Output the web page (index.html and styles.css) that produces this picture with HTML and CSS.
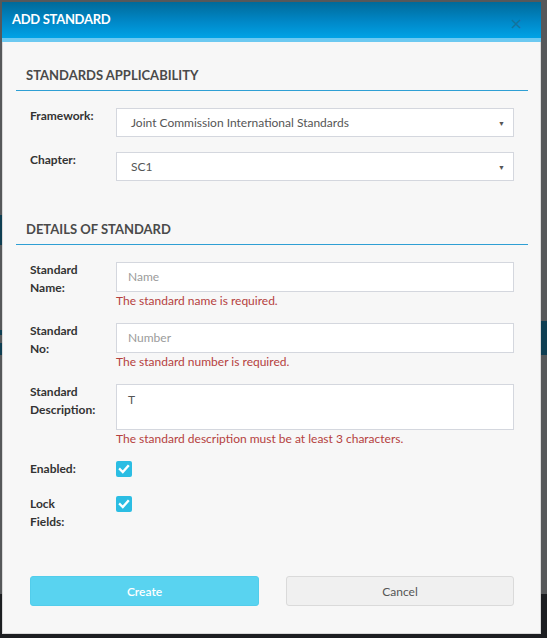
FILE: index.html
```html
<!DOCTYPE html>
<html>
<head>
<meta charset="utf-8">
<link rel="stylesheet" href="styles.css">
</head>
<body>
<div class="backdrop">
  <div class="bg-band bg-band-a"></div>
  <div class="bg-band bg-band-b"></div>
  <div class="bg-band bg-band-c"></div>
  <div class="bg-band bg-band-d"></div>
  <div class="bg-bottom"></div>
</div>
<div class="modal">
  <div class="modal-header">
    <h1 class="modal-title">ADD STANDARD</h1>
    <span class="modal-close">&times;</span>
  </div>
  <div class="modal-body">
    <section class="section">
      <h2 class="section-title">STANDARDS APPLICABILITY</h2>
      <div class="form">
        <div class="row">
          <label class="label">Framework:</label>
          <div class="control">
            <div class="select"><span>Joint Commission International Standards</span><span class="caret">&#9660;</span></div>
          </div>
        </div>
        <div class="row">
          <label class="label">Chapter:</label>
          <div class="control">
            <div class="select"><span>SC1</span><span class="caret">&#9660;</span></div>
          </div>
        </div>
      </div>
    </section>
    <section class="section section-second">
      <h2 class="section-title">DETAILS OF STANDARD</h2>
      <div class="form">
        <div class="row row-input">
          <label class="label">Standard<br>Name:</label>
          <div class="control">
            <div class="input placeholder">Name</div>
            <div class="error">The standard name is required.</div>
          </div>
        </div>
        <div class="row row-input">
          <label class="label">Standard<br>No:</label>
          <div class="control">
            <div class="input placeholder">Number</div>
            <div class="error">The standard number is required.</div>
          </div>
        </div>
        <div class="row row-input">
          <label class="label">Standard<br>Description:</label>
          <div class="control">
            <div class="input textarea">T</div>
            <div class="error">The standard description must be at least 3 characters.</div>
          </div>
        </div>
        <div class="row row-check">
          <label class="label">Enabled:</label>
          <div class="control">
            <span class="checkbox"><svg width="12" height="12" viewBox="0 0 12 12"><path d="M2 6.3 L4.8 9 L10 3.2" fill="none" stroke="#fff" stroke-width="2.4" stroke-linecap="square"/></svg></span>
          </div>
        </div>
        <div class="row row-check">
          <label class="label">Lock<br>Fields:</label>
          <div class="control">
            <span class="checkbox"><svg width="12" height="12" viewBox="0 0 12 12"><path d="M2 6.3 L4.8 9 L10 3.2" fill="none" stroke="#fff" stroke-width="2.4" stroke-linecap="square"/></svg></span>
          </div>
        </div>
      </div>
    </section>
    <div class="actions">
      <button class="btn btn-primary">Create</button>
      <button class="btn btn-default">Cancel</button>
    </div>
  </div>
</div>
</body>
</html>
```

FILE: styles.css
```css
* { box-sizing: border-box; }
html, body {
  margin: 0;
  padding: 0;
  width: 547px;
  height: 638px;
  overflow: hidden;
  font-family: "Lato", "Open Sans", sans-serif;
}
body { background: #555759; position: relative; }

.backdrop { position: absolute; inset: 0; background: #56585a; }
.bg-band { position: absolute; background: #0e3e52; }
.bg-band-a { left: 0; top: 215px; width: 4px; height: 30px; }
.bg-band-b { left: 0; top: 330px; width: 4px; height: 5px; }
.bg-band-c { left: 0; top: 343px; width: 4px; height: 12px; }
.bg-band-d { right: 0; top: 321px; width: 8px; height: 34px; }
.bg-bottom { position: absolute; left: 0; right: 0; top: 594px; bottom: 0; background: #1c1e21; }

.modal {
  position: absolute;
  left: 2px;
  top: 2px;
  width: 539px;
  height: 632px;
  background: #f7f7f7;
  border: 1px solid #d9d9d9;
  border-top: none;
  display: flex;
  flex-direction: column;
}

.modal-header {
  height: 40px;
  background: linear-gradient(to bottom, #006a99 0%, #0088c8 55%, #00a3e6 100%);
  background-size: 100% 36px;
  background-repeat: no-repeat;
  border-bottom: 4px solid #6cc9f1;
  display: flex;
  align-items: center;
  justify-content: space-between;
  padding: 0 18px 0 10px;
  margin: 0 -1px;
}
.modal-title {
  margin: 0;
  color: #fff;
  font-size: 13px;
  font-weight: 700;
  letter-spacing: -0.3px;
  padding-bottom: 2px;
}
.modal-close {
  color: #1a6f95;
  font-size: 16px;
  line-height: 1;
  margin-top: 8px;
  opacity: 0.85;
  font-family: "DejaVu Sans", sans-serif;
}

.modal-body {
  flex: 1;
  padding: 24px 12px 0 13px;
  display: flex;
  flex-direction: column;
}

.section-title {
  margin: 0;
  padding: 0 0 6px 10px;
  height: 25px;
  line-height: 18px;
  font-size: 13px;
  font-weight: 700;
  color: #4a4a4a;
  letter-spacing: 0;
  border-bottom: 1px solid #2e9fd4;
}
.section-second { margin-top: 24px; }

.form { padding: 17px 14px 0 14px; }

.row {
  display: grid;
  grid-template-columns: 86px 1fr;
  margin-bottom: 15px;
}
.row-input { margin-bottom: 14px; }
.row-check { margin-bottom: 18px; }

.label {
  font-size: 12px;
  font-weight: 700;
  color: #333;
  line-height: 18px;
  margin-top: -1px;
}

.select {
  height: 29px;
  background: #fff;
  border: 1px solid #d4d7de;
  display: flex;
  align-items: center;
  justify-content: space-between;
  padding: 0 8px 0 14px;
  font-size: 12px;
  color: #555;
}
.caret { font-size: 7px; color: #555; margin-top: 1px; }

.input {
  height: 30px;
  background: #fff;
  border: 1px solid #d4d7de;
  font-size: 12px;
  line-height: 28px;
  padding: 0 11px;
  color: #555;
}
.placeholder { color: #9b9b9b; }
.textarea { height: 46px; line-height: 20px; padding-top: 5px; }

.error {
  font-size: 12px;
  color: #b5413e;
  line-height: 17px;
}

.checkbox {
  display: flex;
  align-items: center;
  justify-content: center;
  width: 16px;
  height: 16px;
  background: #2bbde3;
  border-radius: 2px;
}

.actions {
  display: grid;
  grid-template-columns: 229px 228px;
  justify-content: space-between;
  padding: 0 14px;
  margin-top: 27px;
}
.btn {
  height: 30px;
  font-family: "Lato", "Open Sans", sans-serif;
  font-size: 12px;
  border-radius: 3px;
  cursor: pointer;
}
.btn-primary {
  background: #59d3f0;
  border: 1px solid #52cdeb;
  color: #fff;
  font-weight: 600;
}
.btn-default {
  background: #f0f0f0;
  border: 1px solid #dadada;
  color: #555;
}
```
